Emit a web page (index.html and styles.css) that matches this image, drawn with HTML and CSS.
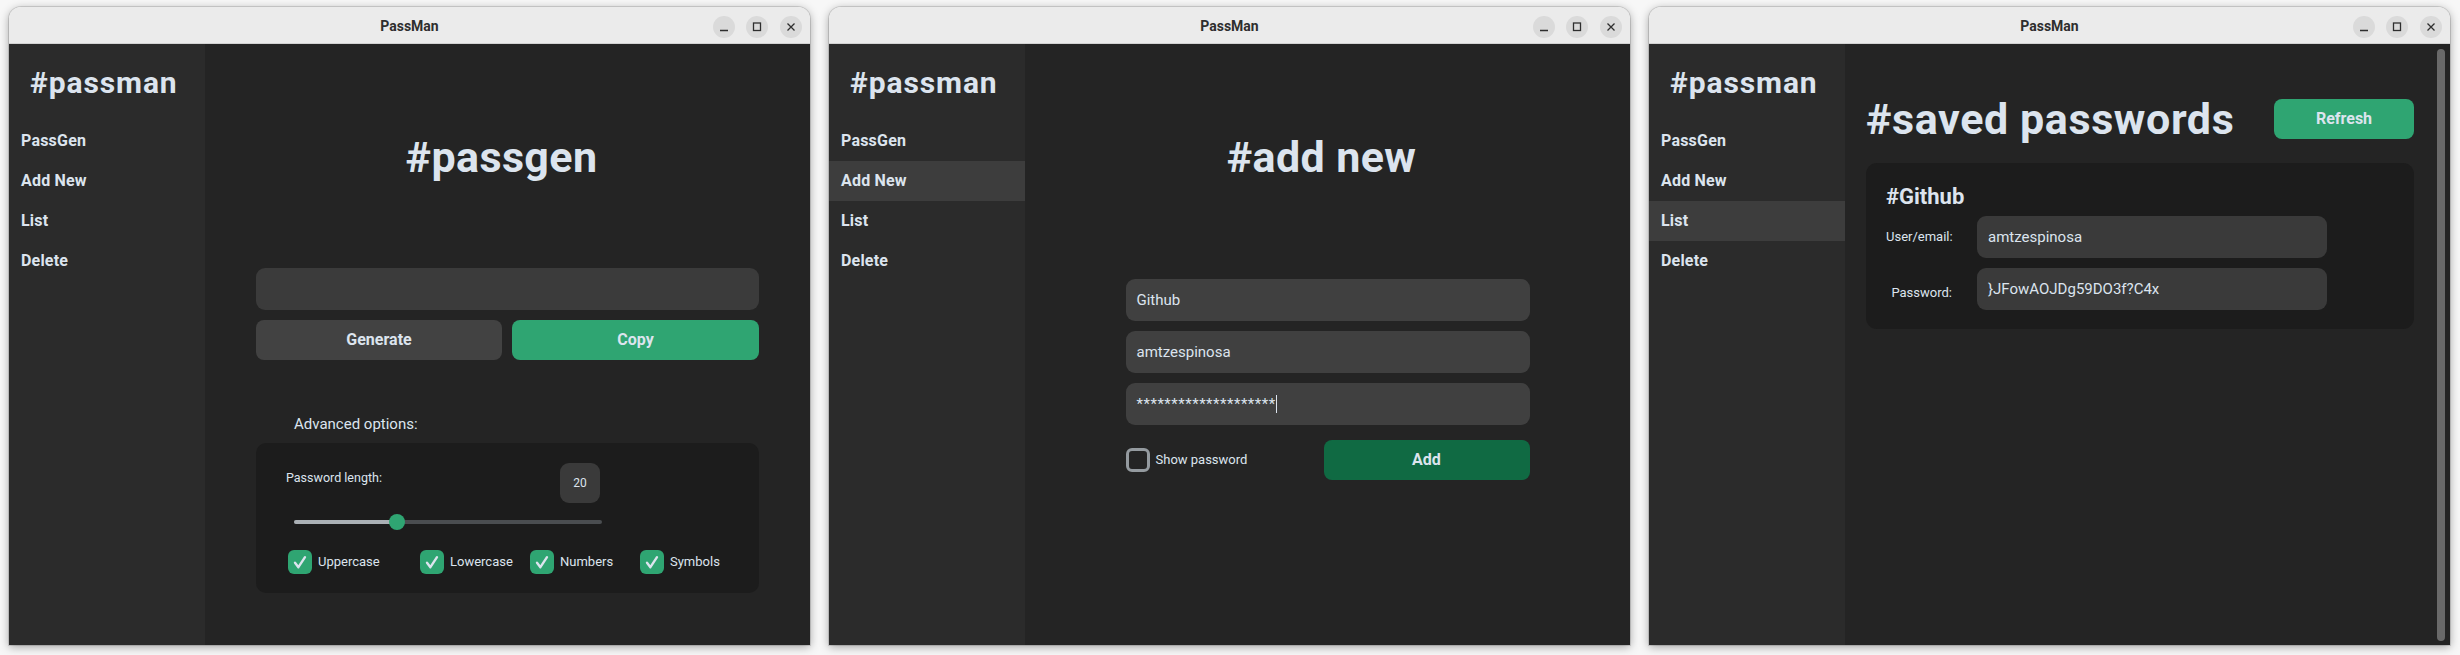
FILE: index.html
```html
<!DOCTYPE html>
<html lang="en">
<head>
<meta charset="utf-8">
<title>PassMan</title>
<link rel="stylesheet" href="styles.css">
</head>
<body>
<div class="desk">

  <!-- Window 1: PassGen -->
  <div class="win">
    <div class="titlebar">
      <span class="title">PassMan</span>
      <div class="controls">
        <span class="ctl"><svg width="22" height="22" viewBox="0 0 22 22"><path d="M7 14.5h8" stroke="#2e2e2e" stroke-width="1.4" fill="none"/></svg></span>
        <span class="ctl"><svg width="22" height="22" viewBox="0 0 22 22"><rect x="7.5" y="7" width="7" height="7.5" stroke="#2e2e2e" stroke-width="1.3" fill="none"/></svg></span>
        <span class="ctl"><svg width="22" height="22" viewBox="0 0 22 22"><path d="M7.5 7.5l7 7M14.5 7.5l-7 7" stroke="#2e2e2e" stroke-width="1.3" fill="none"/></svg></span>
      </div>
    </div>
    <div class="content">
      <aside class="sidebar">
        <div class="logo">#passman</div>
        <nav class="nav">
          <div class="nav-item">PassGen</div>
          <div class="nav-item">Add New</div>
          <div class="nav-item">List</div>
          <div class="nav-item">Delete</div>
        </nav>
      </aside>
      <main class="main">
        <h1 class="page-title">#passgen</h1>
        <div class="gen-form">
          <div class="entry entry-dim"></div>
          <div class="btn-row">
            <div class="btn btn-gray">Generate</div>
            <div class="btn btn-green">Copy</div>
          </div>
          <div class="adv-label">Advanced options:</div>
          <div class="options">
            <div class="len-row">
              <div class="len-label">Password length:</div>
              <div class="num-box">20</div>
            </div>
            <div class="slider">
              <div class="track"><div class="progress" style="width:33.4%"></div></div>
              <div class="knob" style="left:calc(33.4% - 8px)"></div>
            </div>
            <div class="checks">
              <div class="check"><span class="cb on"><svg width="24" height="24" viewBox="0 0 24 24"><path d="M7 12.8l3.4 4.4L17 7.2" stroke="#dce4ee" stroke-width="2.4" fill="none" stroke-linecap="round" stroke-linejoin="round"/></svg></span><span class="check-label">Uppercase</span></div>
              <div class="check"><span class="cb on"><svg width="24" height="24" viewBox="0 0 24 24"><path d="M7 12.8l3.4 4.4L17 7.2" stroke="#dce4ee" stroke-width="2.4" fill="none" stroke-linecap="round" stroke-linejoin="round"/></svg></span><span class="check-label">Lowercase</span></div>
              <div class="check"><span class="cb on"><svg width="24" height="24" viewBox="0 0 24 24"><path d="M7 12.8l3.4 4.4L17 7.2" stroke="#dce4ee" stroke-width="2.4" fill="none" stroke-linecap="round" stroke-linejoin="round"/></svg></span><span class="check-label">Numbers</span></div>
              <div class="check"><span class="cb on"><svg width="24" height="24" viewBox="0 0 24 24"><path d="M7 12.8l3.4 4.4L17 7.2" stroke="#dce4ee" stroke-width="2.4" fill="none" stroke-linecap="round" stroke-linejoin="round"/></svg></span><span class="check-label">Symbols</span></div>
            </div>
          </div>
        </div>
      </main>
    </div>
  </div>

  <!-- Window 2: Add New -->
  <div class="win">
    <div class="titlebar">
      <span class="title">PassMan</span>
      <div class="controls">
        <span class="ctl"><svg width="22" height="22" viewBox="0 0 22 22"><path d="M7 14.5h8" stroke="#2e2e2e" stroke-width="1.4" fill="none"/></svg></span>
        <span class="ctl"><svg width="22" height="22" viewBox="0 0 22 22"><rect x="7.5" y="7" width="7" height="7.5" stroke="#2e2e2e" stroke-width="1.3" fill="none"/></svg></span>
        <span class="ctl"><svg width="22" height="22" viewBox="0 0 22 22"><path d="M7.5 7.5l7 7M14.5 7.5l-7 7" stroke="#2e2e2e" stroke-width="1.3" fill="none"/></svg></span>
      </div>
    </div>
    <div class="content">
      <aside class="sidebar">
        <div class="logo">#passman</div>
        <nav class="nav">
          <div class="nav-item">PassGen</div>
          <div class="nav-item active">Add New</div>
          <div class="nav-item">List</div>
          <div class="nav-item">Delete</div>
        </nav>
      </aside>
      <main class="main">
        <h1 class="page-title">#add new</h1>
        <div class="add-form">
          <div class="entry entry-light">Github</div>
          <div class="entry entry-light">amtzespinosa</div>
          <div class="entry entry-light"><span class="masked">********************</span><span class="caret"></span></div>
          <div class="add-row">
            <div class="check"><span class="cb off"></span><span class="check-label">Show password</span></div>
            <div class="btn btn-dark-green">Add</div>
          </div>
        </div>
      </main>
    </div>
  </div>

  <!-- Window 3: List -->
  <div class="win">
    <div class="titlebar">
      <span class="title">PassMan</span>
      <div class="controls">
        <span class="ctl"><svg width="22" height="22" viewBox="0 0 22 22"><path d="M7 14.5h8" stroke="#2e2e2e" stroke-width="1.4" fill="none"/></svg></span>
        <span class="ctl"><svg width="22" height="22" viewBox="0 0 22 22"><rect x="7.5" y="7" width="7" height="7.5" stroke="#2e2e2e" stroke-width="1.3" fill="none"/></svg></span>
        <span class="ctl"><svg width="22" height="22" viewBox="0 0 22 22"><path d="M7.5 7.5l7 7M14.5 7.5l-7 7" stroke="#2e2e2e" stroke-width="1.3" fill="none"/></svg></span>
      </div>
    </div>
    <div class="content">
      <aside class="sidebar">
        <div class="logo">#passman</div>
        <nav class="nav">
          <div class="nav-item">PassGen</div>
          <div class="nav-item">Add New</div>
          <div class="nav-item active">List</div>
          <div class="nav-item">Delete</div>
        </nav>
      </aside>
      <main class="main main-list">
        <div class="list-scroll">
          <div class="list-head">
            <h1 class="list-title">#saved passwords</h1>
            <div class="btn btn-green btn-refresh">Refresh</div>
          </div>
          <div class="card">
            <div class="card-title">#Github</div>
            <div class="field-row">
              <div class="field-label">User/email:</div>
              <div class="entry">amtzespinosa</div>
            </div>
            <div class="field-row field-row-2">
              <div class="field-label field-label-low">Password:</div>
              <div class="entry">}JFowAOJDg59DO3f?C4x</div>
            </div>
          </div>
        </div>
        <div class="scrollbar"></div>
      </main>
    </div>
  </div>

</div>
</body>
</html>
```

FILE: styles.css
```css
* { box-sizing: border-box; }

html, body {
  margin: 0;
  padding: 0;
  background: #f7f7f7;
  font-family: "Roboto", "Liberation Sans", sans-serif;
  color: #dce4ee;
}

.desk {
  display: flex;
  gap: 19px;
  padding: 7px 0 0 9px;
  width: 2460px;
  height: 655px;
  overflow: hidden;
}

.win {
  width: 801px;
  height: 638px;
  flex: 0 0 801px;
  border-radius: 12px 12px 0 0;
  overflow: hidden;
  display: flex;
  flex-direction: column;
  box-shadow: 0 0 0 1px rgba(0,0,0,0.12), 0 2px 10px rgba(0,0,0,0.35);
}

/* ---------- Title bar ---------- */
.titlebar {
  height: 37px;
  flex: 0 0 37px;
  background: #ebebeb;
  display: grid;
  grid-template-columns: 1fr auto 1fr;
  align-items: center;
  border-bottom: 1px solid #d2d2d2;
}
.title {
  grid-column: 2;
  font-size: 14px;
  font-weight: 700;
  color: #2e2e2e;
  line-height: 37px;
  padding-top: 1px;
}
.controls {
  grid-column: 3;
  justify-self: end;
  display: flex;
  gap: 11.5px;
  padding-right: 8.5px;
  padding-top: 1px;
}
.ctl {
  width: 22px;
  height: 22px;
  border-radius: 50%;
  background: #dadada;
  display: block;
}
.ctl svg { display: block; }

/* ---------- Content ---------- */
.content {
  flex: 1;
  display: flex;
  min-height: 0;
}

.sidebar {
  width: 196px;
  flex: 0 0 196px;
  background: #2b2b2b;
}
.logo {
  margin-top: 21px;
  padding-left: 21px;
  font-size: 30px;
  font-weight: 700;
  line-height: 36px;
  letter-spacing: 0.9px;
  color: #dce4ee;
}
.nav {
  margin-top: 20px;
}
.nav-item {
  height: 40px;
  line-height: 40px;
  padding-left: 12px;
  font-size: 16px;
  font-weight: 700;
  letter-spacing: 0.2px;
  color: #dce4ee;
}
.nav-item.active {
  background: #3d3d3d;
}

.main {
  flex: 1;
  background: #242424;
  min-width: 0;
}

.page-title {
  margin: 88px 0 0 0;
  padding-right: 12px;
  text-align: center;
  font-size: 43px;
  font-weight: 700;
  line-height: 50px;
  letter-spacing: 0.4px;
  color: #dce4ee;
}

/* ---------- Entries & buttons ---------- */
.entry {
  height: 42px;
  border-radius: 9px;
  background: #3a3a3a;
  padding-left: 11px;
  font-size: 15px;
  line-height: 42px;
  color: #dce4ee;
  white-space: nowrap;
  overflow: hidden;
}
.entry-dim { background: #3b3b3b; }
.entry-light { background: #404040; }

.btn {
  height: 40px;
  border-radius: 8px;
  font-size: 16px;
  font-weight: 700;
  line-height: 40px;
  text-align: center;
  color: #dce4ee;
}
.btn-gray { background: #424242; }
.btn-green { background: #2fa572; }
.btn-dark-green { background: #106a43; width: 206px; }

/* ---------- PassGen ---------- */
.gen-form {
  width: 503px;
  margin: 86px auto 0;
}
.btn-row {
  margin-top: 10px;
  display: grid;
  grid-template-columns: 246px 247px;
  gap: 10px;
}
.adv-label {
  margin-top: 54px;
  padding-left: 38px;
  font-size: 15px;
  line-height: 20px;
}
.options {
  margin-top: 9px;
  height: 150px;
  background: #1c1c1c;
  border-radius: 10px;
  padding-top: 20px;
}
.len-row {
  display: grid;
  grid-template-columns: 274px 40px;
  padding-left: 30px;
  align-items: start;
}
.len-label {
  margin-top: 7px;
  font-size: 12.5px;
  line-height: 16px;
}
.num-box {
  width: 40px;
  height: 40px;
  border-radius: 9px;
  background: #3a3a3a;
  font-size: 12px;
  line-height: 40px;
  text-align: center;
}
.slider {
  position: relative;
  margin: 11px 0 0 38px;
  width: 308px;
  height: 16px;
}
.track {
  position: absolute;
  left: 0;
  right: 0;
  top: 6px;
  height: 4px;
  border-radius: 2px;
  background: #4a4d50;
  overflow: hidden;
}
.progress {
  height: 100%;
  background: #aab0b5;
}
.knob {
  position: absolute;
  top: 0;
  width: 16px;
  height: 16px;
  border-radius: 50%;
  background: #2fa572;
}
.checks {
  margin-top: 20px;
  padding-left: 32px;
  display: grid;
  grid-template-columns: 132px 110px 110px auto;
}
.check {
  display: flex;
  align-items: center;
  gap: 6px;
}
.cb {
  width: 24px;
  height: 24px;
  border-radius: 6px;
  display: block;
  flex: 0 0 24px;
}
.cb svg { display: block; }
.cb.on { background: #2fa572; }
.cb.off { border: 3px solid #949a9f; }
.check-label {
  font-size: 13px;
  line-height: 16px;
}

/* ---------- Add New ---------- */
.add-form {
  width: 404px;
  margin: 97px auto 0;
  display: flex;
  flex-direction: column;
  gap: 10px;
}
.add-row {
  margin-top: 5px;
  display: flex;
  justify-content: space-between;
  align-items: center;
}
.masked {
  letter-spacing: 0.5px;
}
.caret {
  display: inline-block;
  width: 1px;
  height: 18px;
  background: #dce4ee;
  vertical-align: -4px;
}

/* ---------- List ---------- */
.main-list {
  display: flex;
}
.list-scroll {
  width: 569px;
  padding: 50px 0 0 21px;
}
.list-head {
  height: 50px;
  display: flex;
  justify-content: space-between;
  align-items: center;
}
.list-title {
  margin: 0;
  font-size: 43px;
  font-weight: 700;
  line-height: 50px;
  letter-spacing: 0.6px;
  color: #dce4ee;
}
.btn-refresh { width: 140px; }
.card {
  margin-top: 19px;
  background: #1c1c1c;
  border-radius: 11px;
  padding: 20px 20px 19px 20px;
}
.card-title {
  font-size: 22px;
  font-weight: 700;
  line-height: 28px;
}
.field-row {
  margin-top: 5px;
  display: grid;
  grid-template-columns: 66px 350px;
  gap: 25px;
  align-items: center;
}
.field-row-2 { margin-top: 10px; }
.field-label {
  text-align: right;
  font-size: 13px;
  line-height: 16px;
}
.field-label-low { padding-top: 8px; }
.scrollbar {
  width: 8px;
  margin: 5px 5px 4px auto;
  border-radius: 4px;
  background: #696969;
}
```
